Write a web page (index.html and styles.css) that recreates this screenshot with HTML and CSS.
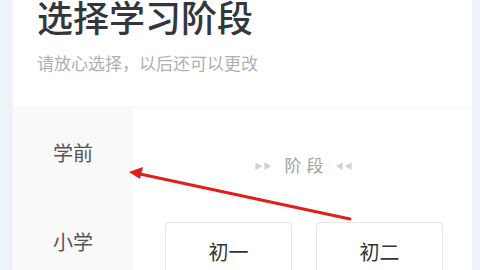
FILE: index.html
```html
<!DOCTYPE html>
<html lang="zh-CN">
<head>
  <meta charset="UTF-8">
  <meta name="viewport" content="width=device-width, initial-scale=1.0">
  <title>选择学习阶段</title>
  <link rel="stylesheet" href="styles.css">
</head>
<body>
  <div class="page">
    <div class="header">
      <h1 class="title">选择学习阶段</h1>
      <p class="subtitle">请放心选择，以后还可以更改</p>
    </div>

    <div class="content">
      <ul class="sidebar">
        <li>学前</li>
        <li>小学</li>
      </ul>

      <div class="panel">
        <div class="section-title">
          <span class="tri">&#9654;&#9654;</span>
          <span class="label">阶段</span>
          <span class="tri">&#9664;&#9664;</span>
        </div>
        <div class="grades">
          <div class="grade">初一</div>
          <div class="grade">初二</div>
        </div>
      </div>
    </div>
  </div>

  <svg class="pointer" width="480" height="270" viewBox="0 0 480 270">
    <line x1="350" y1="219" x2="140" y2="174" stroke="#e01e1a" stroke-width="3" stroke-linecap="round"/>
    <polygon points="129,172 143,167 140,179" fill="#e01e1a"/>
  </svg>
</body>
</html>
```

FILE: styles.css
```css
body {
  margin: 0;
  background-color: #eef2f9;
  font-family: "Noto Sans CJK SC", "Noto Sans", sans-serif;
  color: #333;
  overflow: hidden;
}

.page {
  margin: 0 8px 0 13px;
  height: 270px;
  background-color: #fff;
  display: flex;
  flex-direction: column;
  overflow: hidden;
}

.header {
  flex-shrink: 0;
  height: 108px;
  padding: 0 0 0 24px;
  border-bottom: 1px solid #f4f4f4;
  box-sizing: border-box;
}

.title {
  margin: -4px 0 0;
  font-size: 36px;
  line-height: 40px;
  font-weight: 500;
  color: #33373d;
}

.subtitle {
  margin: 15px 0 0;
  font-size: 17px;
  line-height: 24px;
  color: #b0b0b0;
}

.content {
  flex: 1;
  display: flex;
}

.sidebar {
  list-style: none;
  margin: 0;
  padding: 31px 0 0;
  width: 120px;
  background-color: #f9f9f9;
  text-align: center;
}

.sidebar li {
  font-size: 20px;
  line-height: 28px;
  color: #555;
  margin-bottom: 61px;
}

.panel {
  flex: 1;
  padding: 0 29px 0 32px;
}

.section-title {
  margin-top: 45px;
  display: flex;
  justify-content: center;
  align-items: center;
  gap: 12px;
}

.section-title .label {
  font-size: 17px;
  line-height: 24px;
  color: #a3a3a3;
  letter-spacing: 5px;
  margin-right: -5px;
}

.section-title .tri {
  font-size: 8px;
  color: #d0d0d0;
  letter-spacing: 1px;
}

.grades {
  margin-top: 45px;
  display: grid;
  grid-template-columns: 1fr 1fr;
  gap: 24px;
}

.grade {
  height: 60px;
  border: 1px solid #e6e6e6;
  border-radius: 4px;
  box-sizing: border-box;
  text-align: center;
  padding-top: 15px;
  font-size: 20px;
  line-height: 28px;
  color: #333;
}

.pointer {
  position: absolute;
  left: 0;
  top: 0;
  pointer-events: none;
}
```
